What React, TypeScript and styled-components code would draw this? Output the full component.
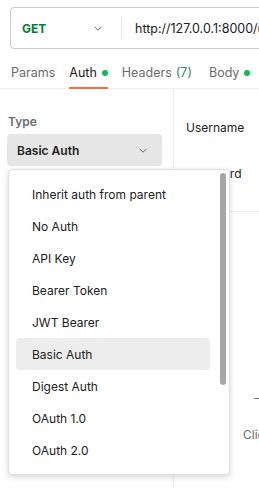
import styled, { createGlobalStyle } from 'styled-components';

const GlobalStyle = createGlobalStyle`
  html, body {
    margin: 0;
    padding: 0;
    background: #fff;
    overflow: hidden;
  }
  body {
    font-family: Inter, "Noto Sans", "Liberation Sans", sans-serif;
    -webkit-font-smoothing: antialiased;
  }
  * { box-sizing: border-box; }
`;

const Page = styled.div`
  width: 259px;
  height: 488px;
  overflow: hidden;
  background: #fff;
`;

const Wide = styled.div`
  width: 560px;
`;

/* ---- request bar ---- */

const UrlBar = styled.div`
  display: flex;
  align-items: center;
  height: 42px;
  margin: 7px 0 0 10px;
  border: 1px solid #cdcdcd;
  border-radius: 4px;
`;

const Method = styled.div`
  display: flex;
  align-items: center;
  justify-content: space-between;
  width: 110px;
  padding: 1px 19px 0 11px;
  font-size: 12px;
  font-weight: 700;
  color: #007f31;
`;

const Sep = styled.div`
  width: 1px;
  height: 23px;
  background: #e6e6e6;
`;

const UrlText = styled.div`
  padding: 1px 0 0 13px;
  font-size: 12.5px;
  color: #212121;
  white-space: nowrap;
`;

/* ---- tabs ---- */

const TabBar = styled.div`
  display: flex;
  gap: 14px;
  margin-top: 10px;
  padding-left: 11px;
  border-bottom: 1px solid #ededed;
`;

const Tab = styled.div<{ $active?: boolean }>`
  display: flex;
  align-items: center;
  gap: 5px;
  padding: 6px 0;
  line-height: 16px;
  font-size: 12.5px;
  color: ${({ $active }) => ($active ? '#212121' : '#6b6b6b')};
  border-bottom: 2px solid ${({ $active }) => ($active ? '#ff6c37' : 'transparent')};
  margin-bottom: -1px;
  white-space: nowrap;
`;

const Count = styled.span`
  margin-left: -1px;
  margin-right: 3px;
  color: #2f8a5c;
`;

const Dot = styled.span`
  width: 6px;
  height: 6px;
  border-radius: 50%;
  background: #0cbb52;
`;

/* ---- body ---- */

const Body = styled.div`
  display: flex;
  height: 400px;
`;

const Left = styled.div`
  width: 174px;
  flex-shrink: 0;
  padding: 25px 0 0 7px;
  border-right: 1px solid #ededed;
`;

const Label = styled.div`
  padding-left: 1px;
  font-size: 12px;
  line-height: 16px;
  font-weight: 600;
  color: #6b6b6b;
`;

const SelectWrap = styled.div`
  position: relative;
  margin-top: 4px;
  width: 155px;
`;

const Select = styled.div`
  display: flex;
  align-items: center;
  justify-content: space-between;
  height: 32px;
  padding: 0 15px 0 10px;
  border-radius: 4px;
  background: #e6e6e6;
  font-size: 12px;
  font-weight: 600;
  color: #212121;
`;

const Menu = styled.div`
  position: absolute;
  top: calc(100% + 3px);
  left: 1px;
  width: 222px;
  height: 306px;
  padding: 8px 0 0 7px;
  overflow: hidden;
  background: #fff;
  border: 1px solid #e0e0e0;
  border-radius: 4px;
  box-shadow: 0 2px 6px rgba(0, 0, 0, 0.16);
  z-index: 5;
`;

const Item = styled.div<{ $selected?: boolean }>`
  display: flex;
  align-items: center;
  width: 194px;
  height: 32px;
  padding-left: 16px;
  border-radius: 4px;
  font-size: 12px;
  color: #212121;
  background: ${({ $selected }) => ($selected ? '#ededed' : 'transparent')};
  white-space: nowrap;
`;

const Thumb = styled.div`
  position: absolute;
  top: 3px;
  right: 3px;
  width: 6px;
  height: 212px;
  border-radius: 3px;
  background: #a6a6a6;
`;

const Right = styled.div`
  flex: 1;
  padding-top: 15px;
`;

const Field = styled.div`
  display: flex;
  align-items: center;
  height: 46px;
  padding-left: 12px;
  font-size: 12px;
  color: #212121;
`;

const Rule = styled.div`
  margin-top: 15px;
  height: 1px;
  background: #ededed;
`;

const Note = styled.div<{ $indent: number; $gap: number }>`
  margin: ${({ $gap }) => $gap}px 0 0 ${({ $indent }) => $indent}px;
  font-size: 12px;
  line-height: 16px;
  color: #6b6b6b;
  white-space: nowrap;
`;

const Chevron = () => (
  <svg width="8" height="5" viewBox="0 0 8 5" fill="none">
    <path d="M0.5 0.75L4 4.25L7.5 0.75" stroke="#6b6b6b" strokeWidth="1" />
  </svg>
);

const authTypes = [
  'Inherit auth from parent',
  'No Auth',
  'API Key',
  'Bearer Token',
  'JWT Bearer',
  'Basic Auth',
  'Digest Auth',
  'OAuth 1.0',
  'OAuth 2.0',
  'Hawk Authentication',
  'AWS Signature',
];

const App = () => {
  return (
    <Page>
      <GlobalStyle />
      <Wide>
        <UrlBar>
          <Method>
            GET
            <Chevron />
          </Method>
          <Sep />
          <UrlText>http://127.0.0.1:8000/users/login</UrlText>
        </UrlBar>

        <TabBar>
          <Tab>Params</Tab>
          <Tab $active>
            Auth <Dot />
          </Tab>
          <Tab>
            Headers <Count>(7)</Count>
          </Tab>
          <Tab>
            Body <Dot />
          </Tab>
          <Tab>Scripts</Tab>
        </TabBar>

        <Body>
          <Left>
            <Label>Type</Label>
            <SelectWrap>
              <Select>
                Basic Auth
                <Chevron />
              </Select>
              <Menu>
                {authTypes.map((t) => (
                  <Item key={t} $selected={t === 'Basic Auth'}>
                    {t}
                  </Item>
                ))}
                <Thumb />
              </Menu>
            </SelectWrap>
          </Left>

          <Right>
            <Field>Username</Field>
            <Field>Password</Field>
            <Rule />
            <Note $indent={80} $gap={178}>–</Note>
            <Note $indent={69} $gap={21}>Click to learn more</Note>
          </Right>
        </Body>
      </Wide>
    </Page>
  );
};

export default App;
